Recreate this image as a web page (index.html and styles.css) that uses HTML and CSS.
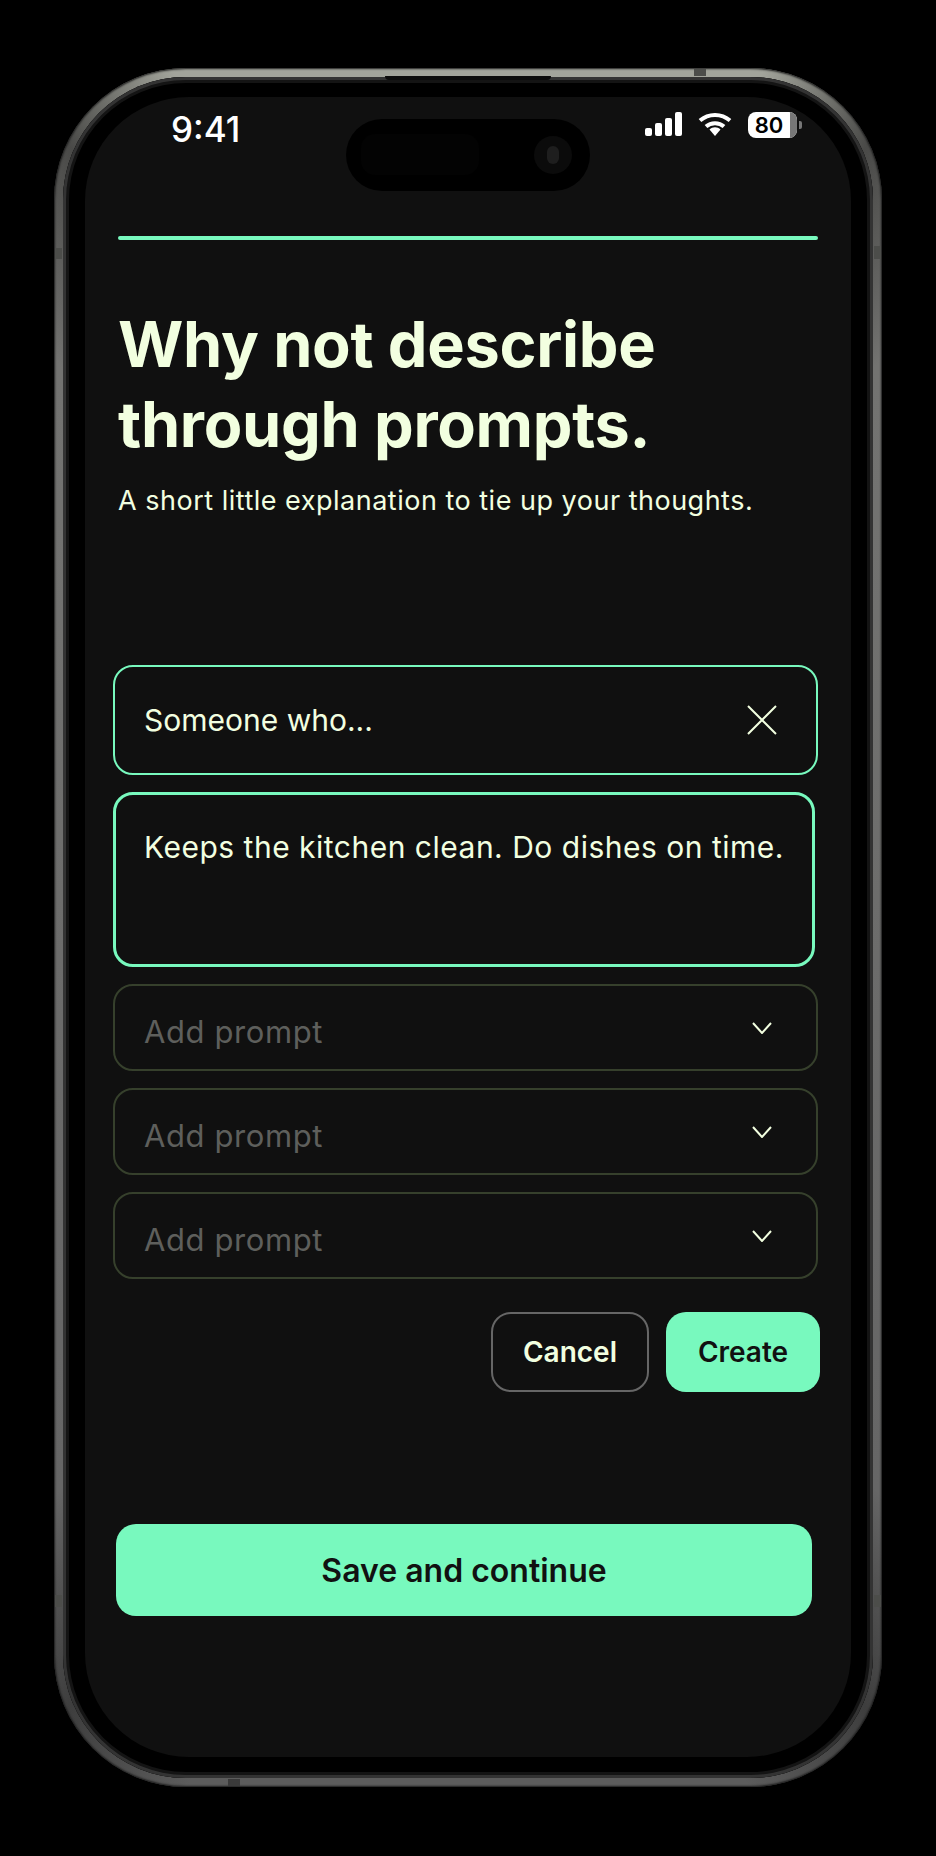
FILE: index.html
```html
<!DOCTYPE html>
<html lang="en">
<head>
    <meta charset="UTF-8">
    <meta name="viewport" content="width=device-width, initial-scale=1.0">
    <title>Why not describe through prompts</title>
    <link rel="stylesheet" href="styles.css">
</head>
<body>
    <div class="phone">
        <!-- antenna bands and speaker on the frame -->
        <span class="band band-top"></span>
        <span class="band band-left"></span>
        <span class="band band-right"></span>
        <span class="band band-left-low"></span>
        <span class="band band-right-low"></span>
        <span class="band band-bottom"></span>
        <span class="speaker"></span>

        <div class="bezel">
            <div class="screen">
                <div class="island">
                    <span class="island-sensor"></span>
                    <span class="island-camera"><span class="island-lens"></span></span>
                </div>

                <div class="status-bar">
                    <span class="time">9:41</span>
                    <div class="status-icons">
                        <svg class="signal" width="37" height="24" viewBox="0 0 37 24" fill="#fff">
                            <rect x="0" y="16" width="7" height="8" rx="2"/>
                            <rect x="10" y="11" width="7" height="13" rx="2"/>
                            <rect x="20" y="6" width="7" height="18" rx="2"/>
                            <rect x="30" y="0" width="7" height="24" rx="2"/>
                        </svg>
                        <svg class="wifi" width="34" height="24" viewBox="0 0 34 24" fill="none" stroke="#fff" stroke-width="4">
                            <path d="M2 8.500C10.500 1 23.500 1 32 8.500"/>
                            <path d="M8 14.500C13 10 21 10 26 14.500"/>
                            <path d="M11.500 17.500C14.500 14.500 19.500 14.500 22.500 17.500L17 24Z" fill="#fff" stroke="none"/>
                        </svg>
                        <div class="battery">
                            <span class="battery-level">80</span>
                            <span class="battery-rest"></span>
                        </div>
                        <span class="battery-nub"></span>
                    </div>
                </div>

                <div class="progress"></div>

                <div class="intro">
                    <h1>Why not describe through prompts.</h1>
                    <p>A short little explanation to tie up your thoughts.</p>
                </div>

                <div class="form">
                    <div class="field field-active">
                        <span>Someone who...</span>
                        <svg width="30" height="30" viewBox="0 0 30 30" fill="none" stroke="#f2ffe0" stroke-width="2">
                            <path d="M1 1L29 29M29 1L1 29"/>
                        </svg>
                    </div>
                    <div class="field field-text">
                        <span>Keeps the kitchen clean. Do dishes on time.</span>
                    </div>
                    <div class="field field-empty">
                        <span>Add prompt</span>
                        <svg class="chevron" width="20" height="12" viewBox="0 0 20 12" fill="none" stroke="#f2ffe0" stroke-width="2">
                            <path d="M1 1L10 11L19 1"/>
                        </svg>
                    </div>
                    <div class="field field-empty">
                        <span>Add prompt</span>
                        <svg class="chevron" width="20" height="12" viewBox="0 0 20 12" fill="none" stroke="#f2ffe0" stroke-width="2">
                            <path d="M1 1L10 11L19 1"/>
                        </svg>
                    </div>
                    <div class="field field-empty">
                        <span>Add prompt</span>
                        <svg class="chevron" width="20" height="12" viewBox="0 0 20 12" fill="none" stroke="#f2ffe0" stroke-width="2">
                            <path d="M1 1L10 11L19 1"/>
                        </svg>
                    </div>
                </div>

                <div class="actions">
                    <button class="btn btn-cancel">Cancel</button>
                    <button class="btn btn-create">Create</button>
                </div>

                <button class="btn-save">Save and continue</button>
            </div>
        </div>
    </div>
</body>
</html>
```

FILE: styles.css
```css
* {
    box-sizing: border-box;
}
body {
    margin: 0;
    background-color: #000;
    font-family: Inter, "Liberation Sans", sans-serif;
}

/* Phone frame */
.phone {
    position: relative;
    width: 828px;
    height: 1719px;
    margin: 68px 0 0 54px;
    padding: 9px;
    border-radius: 132px;
    background: conic-gradient(#a2a49b 0 19deg, #4a4a48 27deg, #737371 36deg, #666 144deg, #3e3e3e 153deg, #5c5c5c 162deg, #5c5c5c 198deg, #3e3e3e 207deg, #666 216deg, #737371 324deg, #4a4a48 333deg, #a2a49b 341deg);
    box-shadow: inset 0 0 2px 1px #1c1c1c;
}
.bezel {
    height: 100%;
    padding: 20px 22px 21px;
    border-radius: 123px;
    background-color: #000;
    box-shadow: inset 0 0 0 3px #333, inset 0 0 0 6px #141414;
}
.screen {
    position: relative;
    height: 100%;
    border-radius: 104px;
    background-color: #101010;
    color: #f2ffe0;
}
.band {
    position: absolute;
    background-color: #4c4d4a;
}
.band-top {
    top: 1px;
    left: 640px;
    width: 12px;
    height: 7px;
}
.band-left {
    top: 180px;
    left: 1px;
    width: 7px;
    height: 11px;
}
.band-right {
    top: 178px;
    right: 1px;
    width: 7px;
    height: 13px;
}
.band-left-low {
    top: 1527px;
    left: 1px;
    width: 7px;
    height: 12px;
}
.band-right-low {
    top: 1527px;
    right: 1px;
    width: 7px;
    height: 12px;
}
.band-bottom {
    bottom: 1px;
    left: 174px;
    width: 12px;
    height: 7px;
    background-color: #3a3a3a;
}
.speaker {
    position: absolute;
    top: 8px;
    left: 331px;
    width: 166px;
    height: 4px;
    border-radius: 0 0 4px 4px;
    background-color: #0c0c0c;
}

/* Dynamic island */
.island {
    position: absolute;
    top: 22px;
    left: 261px;
    width: 244px;
    height: 72px;
    border-radius: 36px;
    background-color: #000;
}
.island-sensor {
    position: absolute;
    top: 15px;
    left: 15px;
    width: 118px;
    height: 41px;
    border-radius: 14px;
    background-color: #030303;
}
.island-camera {
    position: absolute;
    top: 17px;
    left: 188px;
    width: 38px;
    height: 38px;
    border-radius: 50%;
    background-color: #0b0b0b;
}
.island-lens {
    position: absolute;
    top: 10px;
    left: 13px;
    width: 12px;
    height: 18px;
    border-radius: 6px;
    background-color: #1e1e1e;
}

/* Status bar */
.status-bar {
    display: flex;
    justify-content: space-between;
    height: 139px;
    padding: 12px 49px 0 86px;
}
.time {
    font-size: 35px;
    font-weight: 500;
    line-height: 40px;
    color: #fff;
}
.status-icons {
    display: flex;
    align-items: flex-start;
    padding-top: 3px;
}
.wifi {
    margin-left: 16px;
}
.battery {
    display: flex;
    width: 49px;
    height: 26px;
    margin-left: 16px;
    border-radius: 8px;
    overflow: hidden;
    background-color: #fff;
}
.battery-level {
    flex: 1;
    font-size: 22px;
    font-weight: 600;
    line-height: 27px;
    text-align: center;
    color: #000;
}
.battery-rest {
    width: 7px;
    background-color: #777;
}
.battery-nub {
    width: 3px;
    height: 8px;
    margin: 9px 0 0 2px;
    border-radius: 0 2px 2px 0;
    background-color: #777;
}

.progress {
    height: 4px;
    margin: 0 33px;
    border-radius: 2px;
    background-color: #78f9be;
}

/* Heading */
.intro {
    margin: 64px 33px 0;
}
.intro h1 {
    width: 600px;
    margin: 0;
    font-size: 63px;
    font-weight: 650;
    line-height: 80px;
    letter-spacing: -0.3px;
}
.intro p {
    margin: 21px 0 0;
    font-size: 27px;
    line-height: 32px;
    letter-spacing: 0.5px;
}

/* Prompt fields */
.form {
    display: flex;
    flex-direction: column;
    gap: 17px;
    width: 705px;
    margin: 148px 0 0 28px;
}
.field {
    display: flex;
    align-items: center;
    justify-content: space-between;
    padding: 0 39px 0 29px;
    border-radius: 20px;
    font-size: 30px;
}
.field-active {
    height: 110px;
    border: 2px solid #78f9be;
}
.field-text {
    align-items: flex-start;
    width: 702px;
    height: 175px;
    padding: 34px 20px 0 28px;
    border: 3px solid #78f9be;
    letter-spacing: 0.5px;
}
.field-empty {
    height: 87px;
    border: 2px solid #36402c;
    font-size: 31px;
    letter-spacing: 0.6px;
    color: #5e5f5c;
}
.field-empty span {
    padding-top: 8px;
}
.chevron {
    margin-right: 5px;
}

/* Buttons */
.actions {
    display: flex;
    justify-content: flex-end;
    gap: 17px;
    margin: 33px 31px 0 0;
}
.btn {
    height: 80px;
    border-radius: 20px;
    font-family: inherit;
    font-size: 28px;
    font-weight: 600;
}
.btn-cancel {
    width: 158px;
    border: 2px solid #666;
    background-color: #101010;
    color: #f2ffe0;
}
.btn-create {
    width: 154px;
    border: none;
    background-color: #78f9be;
    color: #111;
}
.btn-save {
    display: block;
    width: 696px;
    height: 92px;
    margin: 132px 0 0 31px;
    border: none;
    border-radius: 20px;
    background-color: #78f9be;
    color: #111;
    font-family: inherit;
    font-size: 32px;
    font-weight: 600;
}
```
